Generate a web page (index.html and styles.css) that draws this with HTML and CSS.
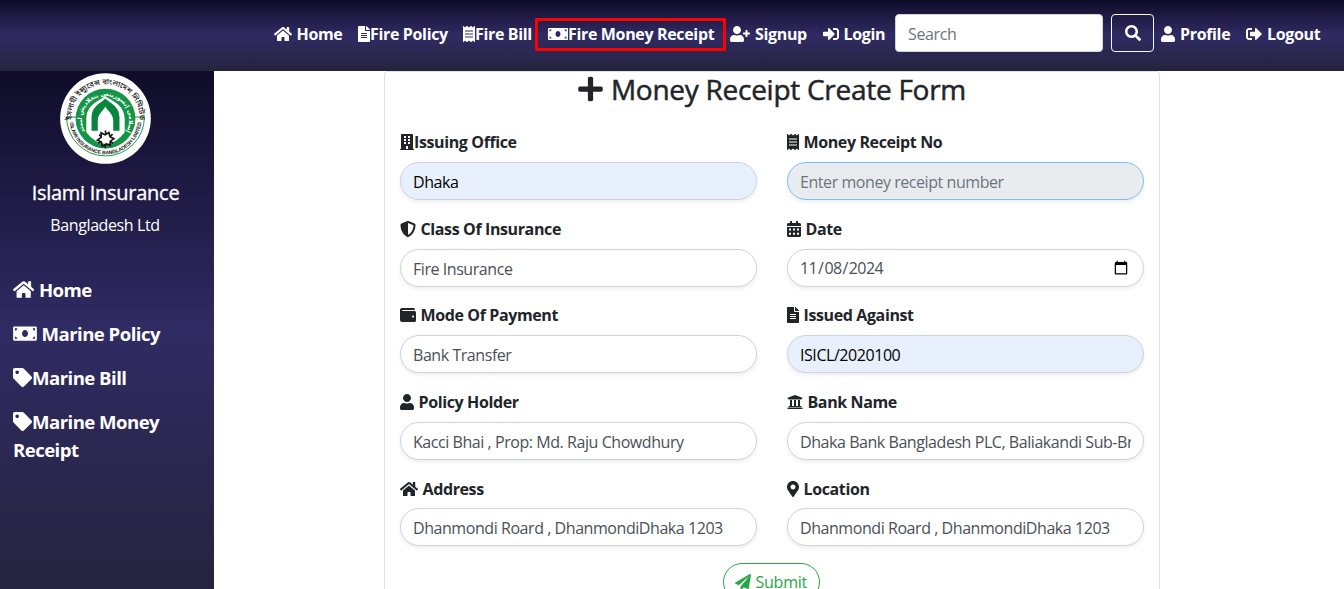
FILE: index.html
```html
<!DOCTYPE html>
<html lang="en">
<head>
<meta charset="utf-8">
<title>Money Receipt Create Form</title>
<link rel="stylesheet" href="styles.css">
</head>
<body>
<svg class="defs" width="0" height="0" aria-hidden="true">
  <symbol id="home" viewBox="0 0 576 512"><path d="M280.4 148.3L96 300.1V464a16 16 0 0 0 16 16l112.1-.3a16 16 0 0 0 15.9-16V368a16 16 0 0 1 16-16h64a16 16 0 0 1 16 16v95.600a16 16 0 0 0 16 16.100L464 480a16 16 0 0 0 16-16V300L295.700 148.300a12.200 12.200 0 0 0-15.300 0zM571.600 251.500L488 182.600V44a12 12 0 0 0-12-12h-56a12 12 0 0 0-12 12v72.600L318.500 43a48 48 0 0 0-61 0L4.300 251.500a12 12 0 0 0-1.600 16.900l25.500 31A12 12 0 0 0 45.200 301l235.200-193.700a12.200 12.200 0 0 1 15.300 0L530.900 301a12 12 0 0 0 16.900-1.600l25.500-31a12 12 0 0 0-1.700-16.900z"/></symbol>
  <symbol id="file" viewBox="0 0 384 512"><path d="M224 136V0H24C10.700 0 0 10.700 0 24v464c0 13.300 10.700 24 24 24h336c13.300 0 24-10.700 24-24V160H248c-13.200 0-24-10.800-24-24zm64 236c0 6.600-5.400 12-12 12H108c-6.600 0-12-5.400-12-12v-8c0-6.600 5.400-12 12-12h168c6.600 0 12 5.400 12 12v8zm0-64c0 6.600-5.400 12-12 12H108c-6.600 0-12-5.400-12-12v-8c0-6.600 5.400-12 12-12h168c6.600 0 12 5.400 12 12v8zm0-72v8c0 6.600-5.400 12-12 12H108c-6.600 0-12-5.400-12-12v-8c0-6.600 5.400-12 12-12h168c6.600 0 12 5.400 12 12zm96-114.100v6.100H256V0h6.100c6.400 0 12.500 2.500 17 7l97.900 98c4.500 4.500 7 10.600 7 16.900z"/></symbol>
  <symbol id="receipt" viewBox="0 0 384 512"><path d="M358.400 3.200L320 48 265.600 3.200a15.900 15.900 0 0 0-19.200 0L192 48 137.600 3.200a15.900 15.900 0 0 0-19.200 0L64 48 25.600 3.200C15-4.700 0 2.800 0 16v480c0 13.200 15 20.700 25.600 12.800L64 464l54.400 44.800a15.900 15.900 0 0 0 19.200 0L192 464l54.400 44.800a15.900 15.900 0 0 0 19.200 0L320 464l38.400 44.800c10.500 7.900 25.600.4 25.600-12.800V16c0-13.200-15-20.700-25.600-12.800zM320 360c0 4.400-3.600 8-8 8H72c-4.400 0-8-3.600-8-8v-16c0-4.400 3.600-8 8-8h240c4.400 0 8 3.600 8 8v16zm0-96c0 4.400-3.600 8-8 8H72c-4.400 0-8-3.600-8-8v-16c0-4.400 3.600-8 8-8h240c4.400 0 8 3.600 8 8v16zm0-96c0 4.400-3.600 8-8 8H72c-4.400 0-8-3.600-8-8v-16c0-4.400 3.600-8 8-8h240c4.400 0 8 3.600 8 8v16z"/></symbol>
  <symbol id="money" viewBox="0 0 640 512"><path d="M608 64H32C14.300 64 0 78.300 0 96v320c0 17.700 14.300 32 32 32h576c17.700 0 32-14.300 32-32V96c0-17.700-14.300-32-32-32zM48 400v-64c35.300 0 64 28.700 64 64H48zm0-224v-64h64c0 35.300-28.700 64-64 64zm272 176c-44.200 0-80-43-80-96 0-53 35.800-96 80-96s80 43 80 96c0 53-35.800 96-80 96zm272 48h-64c0-35.300 28.700-64 64-64v64zm0-224c-35.300 0-64-28.700-64-64h64v64z"/></symbol>
  <symbol id="userplus" viewBox="0 0 640 512"><path d="M624 208h-64v-64c0-8.800-7.200-16-16-16h-32c-8.800 0-16 7.200-16 16v64h-64c-8.800 0-16 7.200-16 16v32c0 8.800 7.200 16 16 16h64v64c0 8.800 7.200 16 16 16h32c8.800 0 16-7.200 16-16v-64h64c8.800 0 16-7.200 16-16v-32c0-8.800-7.200-16-16-16zm-400 48c70.700 0 128-57.300 128-128S294.700 0 224 0 96 57.300 96 128s57.300 128 128 128zm89.600 32h-16.700a174 174 0 0 1-145.800 0h-16.700C60.200 288 0 348.200 0 422.400V464c0 26.500 21.500 48 48 48h352c26.500 0 48-21.500 48-48v-41.600c0-74.200-60.200-134.400-134.400-134.400z"/></symbol>
  <symbol id="signin" viewBox="0 0 512 512"><path d="M416 448h-84c-6.600 0-12-5.400-12-12v-40c0-6.600 5.400-12 12-12h84c17.700 0 32-14.300 32-32V160c0-17.700-14.300-32-32-32h-84c-6.600 0-12-5.400-12-12V76c0-6.600 5.400-12 12-12h84c53 0 96 43 96 96v192c0 53-43 96-96 96zm-47-209L201 71c-15-15-41-4.500-41 17v96H24c-13.300 0-24 10.700-24 24v96c0 13.300 10.700 24 24 24h136v96c0 21.500 26 32 41 17l168-168c9.300-9.400 9.300-24.600 0-34z"/></symbol>
  <symbol id="signout" viewBox="0 0 512 512"><path d="M497 273L329 441c-15 15-41 4.500-41-17v-96H152c-13.300 0-24-10.700-24-24v-96c0-13.300 10.700-24 24-24h136V88c0-21.400 25.900-32 41-17l168 168c9.300 9.400 9.300 24.600 0 34zM192 436v-40c0-6.600-5.400-12-12-12H96c-17.700 0-32-14.300-32-32V160c0-17.700 14.300-32 32-32h84c6.600 0 12-5.400 12-12V76c0-6.600-5.400-12-12-12H96c-53 0-96 43-96 96v192c0 53 43 96 96 96h84c6.600 0 12-5.400 12-12z"/></symbol>
  <symbol id="search" viewBox="0 0 512 512"><path d="M505 442.700L405.300 343c-4.500-4.500-10.600-7-17-7H372c27.600-35.300 44-79.700 44-128C416 93.100 322.900 0 208 0S0 93.100 0 208s93.100 208 208 208c48.300 0 92.700-16.400 128-44v16.300c0 6.400 2.500 12.500 7 17l99.700 99.700c9.400 9.400 24.600 9.400 33.900 0l28.300-28.300c9.400-9.400 9.400-24.600.1-34zM208 336c-70.700 0-128-57.200-128-128 0-70.700 57.200-128 128-128 70.700 0 128 57.200 128 128 0 70.700-57.200 128-128 128z"/></symbol>
  <symbol id="user" viewBox="0 0 448 512"><path d="M224 256c70.700 0 128-57.300 128-128S294.700 0 224 0 96 57.300 96 128s57.300 128 128 128zm89.600 32h-16.700a174 174 0 0 1-145.800 0h-16.700C60.200 288 0 348.200 0 422.400V464c0 26.500 21.500 48 48 48h352c26.500 0 48-21.500 48-48v-41.600c0-74.200-60.200-134.400-134.400-134.400z"/></symbol>
  <symbol id="tag" viewBox="0 0 512 512"><path d="M0 252.100V48C0 21.500 21.500 0 48 0h204.100a48 48 0 0 1 33.900 14.100l211.900 211.900c18.700 18.700 18.700 49.100 0 67.900L293.800 497.900c-18.700 18.700-49.100 18.700-67.900 0L14.100 286.100A48 48 0 0 1 0 252.100zM112 64c-26.500 0-48 21.500-48 48s21.500 48 48 48 48-21.500 48-48-21.500-48-48-48z"/></symbol>
  <symbol id="plus" viewBox="0 0 448 512"><path d="M416 208H272V64c0-17.700-14.300-32-32-32h-32c-17.700 0-32 14.300-32 32v144H32c-17.700 0-32 14.300-32 32v32c0 17.700 14.300 32 32 32h144v144c0 17.700 14.300 32 32 32h32c17.700 0 32-14.300 32-32V304h144c17.700 0 32-14.300 32-32v-32c0-17.700-14.300-32-32-32z"/></symbol>
  <symbol id="building" viewBox="0 0 448 512"><path fill-rule="evenodd" d="M436 480h-20V24c0-13.300-10.700-24-24-24H56C42.700 0 32 10.700 32 24v456H12c-6.600 0-12 5.400-12 12v20h448v-20c0-6.600-5.400-12-12-12zM128 64h64v64h-64zM256 64h64v64h-64zM128 160h64v64h-64zM256 160h64v64h-64zM128 256h64v64h-64zM256 256h64v64h-64zM192 480v-96h64v96z"/></symbol>
  <symbol id="shield" viewBox="0 0 512 512"><path d="M466.500 83.700l-192-80a48.200 48.200 0 0 0-36.900 0l-192 80C27.700 91.100 16 108.600 16 128c0 198.500 114.500 335.700 221.500 380.300 11.800 4.900 25.100 4.900 36.900 0C360.100 472.600 496 349.300 496 128c0-19.400-11.700-36.900-29.500-44.300zM256.100 446.300l-.1-381 175.900 73.300c-3.300 151.400-82.100 261.100-175.800 307.700z"/></symbol>
  <symbol id="calendar" viewBox="0 0 448 512"><path fill-rule="evenodd" d="M0 464c0 26.500 21.500 48 48 48h352c26.500 0 48-21.500 48-48V192H0zM64 236h64v64H64zM192 236h64v64h-64zM320 236h64v64h-64zM64 372h64v64H64zM192 372h64v64h-64zM320 372h64v64h-64zM400 64h-48V16c0-8.800-7.200-16-16-16h-32c-8.800 0-16 7.200-16 16v48H160V16c0-8.800-7.200-16-16-16h-32c-8.800 0-16 7.200-16 16v48H48C21.500 64 0 85.500 0 112v48h448v-48c0-26.500-21.500-48-48-48z"/></symbol>
  <symbol id="wallet" viewBox="0 0 512 512"><path d="M461.200 128H80c-8.840 0-16-7.160-16-16s7.160-16 16-16h384c8.840 0 16-7.160 16-16 0-26.510-21.490-48-48-48H64C28.650 32 0 60.650 0 96v320c0 35.350 28.650 64 64 64h397.200c28.020 0 50.800-21.530 50.800-48V176c0-26.470-22.780-48-50.800-48zM416 336c-17.670 0-32-14.330-32-32s14.330-32 32-32 32 14.330 32 32-14.330 32-32 32z"/></symbol>
  <symbol id="bank" viewBox="0 0 512 512"><path d="M496 128v16a8 8 0 0 1-8 8h-24v12c0 6.600-5.400 12-12 12H60c-6.600 0-12-5.400-12-12v-12H24a8 8 0 0 1-8-8v-16a8 8 0 0 1 4.900-7.400l232-88a8 8 0 0 1 6.100 0l232 88A8 8 0 0 1 496 128zm-24 304H40c-13.300 0-24 10.700-24 24v16a8 8 0 0 0 8 8h464a8 8 0 0 0 8-8v-16c0-13.300-10.700-24-24-24zM96 192v192H60c-6.600 0-12 5.400-12 12v20h416v-20c0-6.600-5.400-12-12-12h-36V192h-64v192h-64V192h-64v192h-64V192H96z"/></symbol>
  <symbol id="pin" viewBox="0 0 384 512"><path d="M172.300 501.700C27 291 0 269.400 0 192 0 86 86 0 192 0s192 86 192 192c0 77.400-27 99-172.300 309.700-9.500 13.800-29.900 13.800-39.400 0zM192 272c44.200 0 80-35.800 80-80s-35.800-80-80-80-80 35.800-80 80 35.800 80 80 80z"/></symbol>
  <symbol id="plane" viewBox="0 0 512 512"><path d="M476 3.200L12.500 270.600c-18.100 10.400-15.800 35.600 2.200 43.200L121 358.400l287.300-253.200c5.500-4.900 13.300 2.600 8.600 8.300L176 407v80.500c0 23.600 28.500 32.900 42.500 15.800L282 426l124.600 52.200c14.200 6 30.400-2.900 33-18.200l72-432C515 7.800 493.300-6.800 476 3.200z"/></symbol>
</svg>

<header class="topbar">
  <nav class="topnav">
    <a class="n-home"><svg class="w18 gap"><use href="#home"/></svg><span>Home</span></a>
    <a class="n-policy"><svg class="w12"><use href="#file"/></svg><span>Fire Policy</span></a>
    <a class="n-bill"><svg class="w12"><use href="#receipt"/></svg><span>Fire Bill</span></a>
    <a class="n-money"><svg class="w20"><use href="#money"/></svg><span>Fire Money Receipt</span></a>
    <a class="n-signup"><svg class="w20 gap"><use href="#userplus"/></svg><span>Signup</span></a>
    <a class="n-login"><svg class="w16 gap"><use href="#signin"/></svg><span>Login</span></a>
  </nav>
  <form class="search">
    <input class="search-field" placeholder="Search">
    <button type="button" class="search-btn"><svg class="w16"><use href="#search"/></svg></button>
  </form>
  <nav class="topnav">
    <a class="n-profile"><svg class="w14 gap"><use href="#user"/></svg><span>Profile</span></a>
    <a class="n-logout"><svg class="w16 gap"><use href="#signout"/></svg><span>Logout</span></a>
  </nav>
</header>

<div class="layout">
  <aside class="sidebar">
    <svg class="logo" viewBox="0 0 277 277">
      <defs>
        <path id="arc-top" d="M35 138A103.500 103.500 0 0 1 242 138"/>
        <path id="arc-mid" d="M84 189A72 72 0 1 1 193 189"/>
        <path id="arc-bot" d="M29 138A109.500 109.500 0 0 0 248 138"/>
      </defs>
      <circle cx="138.500" cy="138.500" r="138" fill="#fff"/>
      <path d="M20 134A118 118 0 0 0 257 134H226A88 88 0 0 1 51 134Z" fill="#fff" stroke="#1a9a4b" stroke-width="3"/>
      <circle cx="138.500" cy="139" r="91" fill="#159447"/>
      <path d="M138 70C124 84 80 92 80 142V180Q106 214 138 215T197 180V142C197 92 153 84 138 70Z" fill="#fff"/>
      <path d="M138 78C126 91 96 101 96 134V176H181V134C181 101 150 91 138 78Z" fill="#08843d"/>
      <path d="M138 102C132 116 115 122 115 146V214H162V146C162 122 144 116 138 102Z" fill="#fff"/>
      <g fill="none" stroke="#151515" stroke-width="5"><path d="M125 182l12 6 12-7 3 13 12 6-11 8 0 13-12-5-12 7-3-13-12-6 11-8z"/><path d="M119 188l8 6M138 175l2 12M160 186l-8 8M162 214l-10-6M138 229v-12M116 214l10-6"/></g>
      <text class="logo-bn"><textPath href="#arc-top" startOffset="50%">ইসলামী ইন্স্যুরেন্স বাংলাদেশ লিমিটেড</textPath></text>
      <text class="logo-ar"><textPath href="#arc-mid" startOffset="50%">إسلامي إنسورينس بنغلاديش ليمتد</textPath></text>
      <text class="logo-en"><textPath href="#arc-bot" startOffset="50%">ISLAMI INSURANCE BANGLADESH LIMITED</textPath></text>
    </svg>
    <h5 class="brand">Islami Insurance</h5>
    <p class="brand-sub">Bangladesh Ltd</p>
    <nav class="sidenav">
      <a><svg class="s-home gap"><use href="#home"/></svg><span>Home</span></a>
      <a><svg class="s-money gap"><use href="#money"/></svg><span>Marine Policy</span></a>
      <a><svg class="s-tag"><use href="#tag"/></svg><span>Marine Bill</span></a>
      <a><svg class="s-tag"><use href="#tag"/></svg><span>Marine Money Receipt</span></a>
    </nav>
  </aside>

  <main class="content">
    <form class="card">
      <h3 class="title"><svg class="t-plus"><use href="#plus"/></svg><span>Money Receipt Create Form</span></h3>
      <div class="fields">
        <label class="field"><span class="caption"><svg class="w14"><use href="#building"/></svg><span>Issuing Office</span></span><input class="filled" value="Dhaka"></label>
        <label class="field"><span class="caption"><svg class="w12 gap"><use href="#receipt"/></svg><span>Money Receipt No</span></span><input class="active" placeholder="Enter money receipt number"></label>
        <label class="field"><span class="caption"><svg class="w16 gap"><use href="#shield"/></svg><span>Class Of Insurance</span></span><input value="Fire Insurance"></label>
        <label class="field"><span class="caption"><svg class="w14 gap"><use href="#calendar"/></svg><span>Date</span></span><input type="date" value="2024-11-08"></label>
        <label class="field"><span class="caption"><svg class="w16 gap"><use href="#wallet"/></svg><span>Mode Of Payment</span></span><input value="Bank Transfer"></label>
        <label class="field"><span class="caption"><svg class="w12 gap"><use href="#file"/></svg><span>Issued Against</span></span><input class="filled" value="ISICL/2020100"></label>
        <label class="field"><span class="caption"><svg class="w14 gap"><use href="#user"/></svg><span>Policy Holder</span></span><input value="Kacci Bhai , Prop: Md. Raju Chowdhury"></label>
        <label class="field"><span class="caption"><svg class="w16 gap"><use href="#bank"/></svg><span>Bank Name</span></span><input value="Dhaka Bank Bangladesh PLC, Baliakandi Sub-Branch"></label>
        <label class="field"><span class="caption"><svg class="w18 gap"><use href="#home"/></svg><span>Address</span></span><input value="Dhanmondi Roard , DhanmondiDhaka 1203"></label>
        <label class="field"><span class="caption"><svg class="w12 gap"><use href="#pin"/></svg><span>Location</span></span><input value="Dhanmondi Roard , DhanmondiDhaka 1203"></label>
      </div>
      <div class="actions"><button type="button" class="submit"><svg class="w16 gap"><use href="#plane"/></svg><span>Submit</span></button></div>
    </form>
  </main>
</div>
<div class="highlight"></div>
</body>
</html>
```
FILE: styles.css
```css
* { box-sizing: border-box; }
body {
  margin: 0;
  height: 589px;
  overflow: hidden;
  background: #fff;
  color: #212529;
  font: 16px/24px "Open Sans", "Noto Sans", sans-serif;
  letter-spacing: -0.4px;
}
svg { fill: currentColor; flex: none; }
.defs { position: absolute; }
.w12 { width: 12px; height: 16px; }
.w14 { width: 14px; height: 16px; }
.w16 { width: 16px; height: 16px; }
.w18 { width: 18px; height: 16px; }
.w20 { width: 20px; height: 16px; }
.gap { margin-right: 4.5px; }
input, button { font: inherit; letter-spacing: inherit; }

.topbar {
  display: flex;
  align-items: center;
  height: 71px;
  padding: 0 0 3px 274px;
  background: linear-gradient(#0f0c29, #302b63, #24243e);
}
.topnav { display: flex; color: #fff; font-weight: 700; }
.topnav a { display: flex; align-items: center; white-space: nowrap; letter-spacing: -0.34px; }
.n-home { width: 84px; }
.n-policy { width: 105px; }
.n-bill { width: 85px; }
.n-money { width: 182px; }
.n-signup { width: 93px; }
.n-login { width: 72px; }
.n-profile { width: 85px; }
.n-signup .gap, .n-profile .gap, .n-logout .gap { margin-right: 5px; }
.search { display: flex; gap: 8px; margin: -2px 7px 0 0; }
.search-field {
  width: 208px;
  height: 38px;
  padding: 7px 12px 5px;
  border: 1px solid #ced4da;
  border-radius: 4px;
  letter-spacing: -0.35px;
}
.search-btn {
  display: flex;
  align-items: center;
  justify-content: center;
  width: 43px;
  height: 38px;
  padding: 0;
  border: 1px solid #f8f9fa;
  border-radius: 4px;
  background: transparent;
  color: #fff;
}
input::placeholder { color: #6c757d; opacity: 1; }
.highlight {
  position: absolute;
  left: 535px;
  top: 18px;
  width: 191px;
  height: 33px;
  border: 3px solid #f00;
  border-radius: 1px;
}

.layout { display: flex; height: 518px; }
.sidebar {
  width: 214px;
  flex: none;
  padding-top: 2px;
  background: linear-gradient(#0f0c29, #302b63, #24243e);
  color: #fff;
  text-align: center;
}
.logo { display: block; width: 91px; height: 91px; margin: 0 auto 17px 60px; letter-spacing: 0; }
.logo-bn { font: 500 23px "Noto Sans Bengali", "Noto Sans", sans-serif; fill: #111; text-anchor: middle; }
.logo-ar { font: 700 18px "DejaVu Sans", sans-serif; fill: #fff; text-anchor: middle; }
.logo-en { font: 700 15.5px "Liberation Sans", sans-serif; fill: #222; text-anchor: middle; letter-spacing: -0.3px; }
.brand {
  margin: 0;
  padding-right: 3px;
  font-size: 20px;
  font-weight: 500;
  line-height: 24px;
  letter-spacing: -0.27px;
  -webkit-text-stroke: 0.35px currentColor;
}
.brand-sub { margin: 8px 4px 0 0; }
.sidenav { margin-top: 31px; padding: 0 13px; text-align: left; font-size: 18.6px; font-weight: 700; line-height: 28px; letter-spacing: -0.55px; }
.sidenav a { display: block; padding: 8px 0; }
.sidenav svg { height: 19px; vertical-align: -2px; }
.s-home { width: 21.4px; }
.s-money { width: 24px; }
.s-tag { width: 19px; }

.content { flex: 1; padding-left: 170px; }
.card {
  width: 776px;
  height: 518px;
  padding: 0 15px;
  overflow: hidden;
  border: 1px solid #dfe1e4;
  border-bottom: 0;
  border-radius: 4px 4px 0 0;
}
.title {
  display: flex;
  align-items: center;
  justify-content: center;
  margin: 0 0 25px;
  height: 33px;
  font-size: 28px;
  font-weight: 500;
  letter-spacing: -0.27px;
}
.title span { -webkit-text-stroke: 0.5px currentColor; }
.t-plus { width: 25px; height: 28px; margin-right: 8px; }
.fields { display: grid; grid-template-columns: 357px 357px; gap: 16px 30px; }
.field { display: block; height: 70.6px; }
.caption { display: flex; align-items: center; height: 24.5px; margin-bottom: 7.5px; font-weight: 700; letter-spacing: -0.38px; }
.field input {
  display: block;
  width: 100%;
  height: 38px;
  padding: 7px 12px 5px;
  border: 1px solid #ced4da;
  border-radius: 20px;
  background: #fff;
  color: #495057;
  letter-spacing: -0.44px;
  box-shadow: 0 2px 4px rgba(0, 0, 0, .075);
}
.field input[type="date"] { padding-top: 6px; padding-bottom: 6px; padding-left: 11px; letter-spacing: -0.6px; }
.field input.filled { background: #e8f0fe; color: #000; }
.field input.active { background: #e9ecef; border-color: #80bdff; }
.actions { display: flex; justify-content: center; margin: 16px 2px 0 0; }
.submit {
  display: flex;
  align-items: center;
  justify-content: center;
  width: 97px;
  height: 38px;
  padding: 0;
  border: 1px solid #28a745;
  border-radius: 20px;
  background: #fff;
  color: #28a745;
  letter-spacing: -0.25px;
}
```
